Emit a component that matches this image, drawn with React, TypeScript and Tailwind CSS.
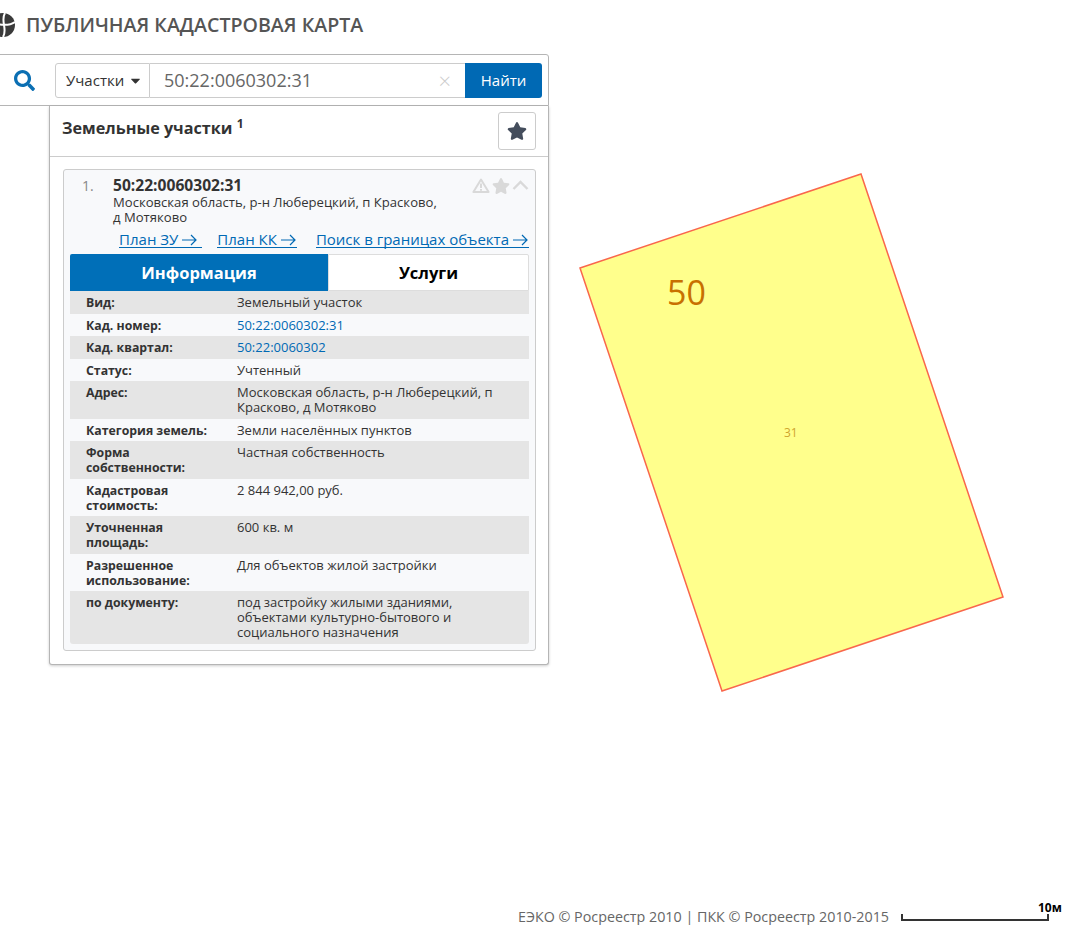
import { FaSearch, FaStar, FaCaretDown } from "react-icons/fa";

const rows: { label: string; value: string[]; link?: boolean }[] = [
  { label: "Вид:", value: ["Земельный участок"] },
  { label: "Кад. номер:", value: ["50:22:0060302:31"], link: true },
  { label: "Кад. квартал:", value: ["50:22:0060302"], link: true },
  { label: "Статус:", value: ["Учтенный"] },
  { label: "Адрес:", value: ["Московская область, р-н Люберецкий, п", "Красково, д Мотяково"] },
  { label: "Категория земель:", value: ["Земли населённых пунктов"] },
  { label: "Форма собственности:", value: ["Частная собственность"] },
  { label: "Кадастровая стоимость:", value: ["2 844 942,00 руб."] },
  { label: "Уточненная площадь:", value: ["600 кв. м"] },
  { label: "Разрешенное использование:", value: ["Для объектов жилой застройки"] },
  {
    label: "по документу:",
    value: ["под застройку жилыми зданиями,", "объектами культурно-бытового и", "социального назначения"],
  },
];

function Logo() {
  return (
    <svg width="24" height="24" viewBox="0 0 24 24" className="shrink-0">
      <circle cx="12" cy="12" r="12" fill="#3a3a3a" />
      <path d="M0 13 C8 9 16 15 24 9" stroke="#fff" strokeWidth="2" fill="none" />
      <path d="M14 0 C9 8 17 16 12 24" stroke="#fff" strokeWidth="2" fill="none" />
    </svg>
  );
}

function Arrow() {
  return (
    <svg width="16" height="12" viewBox="0 0 16 12" className="inline-block ml-[4px] align-[-1px]">
      <path d="M0 6H14M9 1l5 5-5 5" stroke="#0069b4" strokeWidth="1.2" fill="none" />
    </svg>
  );
}

function Warning() {
  return (
    <svg width="18" height="15" viewBox="0 0 18 15">
      <path d="M9 1.5L16.6 14H1.4Z" fill="none" stroke="#d9d9d9" strokeWidth="2" strokeLinejoin="round" />
      <path d="M8 5.5h2v4.5h-2zM8 11h2v1.8h-2z" fill="#d9d9d9" />
    </svg>
  );
}

export default function App() {
  return (
    <div className="relative h-[925px] w-full overflow-hidden bg-white font-['Open_Sans',sans-serif]">
      {/* Карта */}
      <svg width="1072" height="925" className="absolute inset-0">
        <polygon points="580,268 861,174 1003,597 722,691" fill="#ffff8c" stroke="#f9674c" strokeWidth="1.5" />
        <text x="667" y="305" fontSize="34" fontWeight="500" fill="#c87000" fontFamily="Open Sans">50</text>
        <text x="784" y="437" fontSize="12" fill="#cfa52e" fontFamily="Open Sans">31</text>
      </svg>

      {/* Шапка */}
      <div className="relative flex h-[54px] items-center gap-[11px] ml-[-9px] pb-[5px]">
        <Logo />
        <span className="text-[19.6px] font-semibold text-[#555] leading-none">ПУБЛИЧНАЯ КАДАСТРОВАЯ КАРТА</span>
      </div>

      {/* Поиск */}
      <div className="relative w-[550px] ml-[-1px] flex h-[52px] items-center border border-[#b5b5b5] rounded-tr-[3px] bg-white">
        <div className="w-[55px] flex justify-end pr-[20px]">
          <FaSearch className="text-[#0b6fb3] text-[21px]" />
        </div>
        <div className="flex h-[35px] w-[487px] text-[15px]">
          <div className="flex w-[95px] items-center border border-[#ccc] rounded-l-[3px] pl-[10px] gap-[4px] text-[#333]">
            Участки
            <FaCaretDown className="text-[#333] text-[15px]" />
          </div>
          <div className="flex flex-1 items-center border-y border-[#ccc] pl-[14px] pr-[14px] justify-between text-[18px] text-[#666]">
            <span>50:22:0060302:31</span>
            <span className="text-[#ccc] text-[22px] font-light">×</span>
          </div>
          <div className="flex w-[77px] items-center justify-center bg-[#0069b4] rounded-r-[3px] text-white">Найти</div>
        </div>
      </div>

      {/* Панель результатов */}
      <div className="relative ml-[49px] w-[500px] h-[559px] border-x border-b border-[#b5b5b5] rounded-b-[3px] bg-white shadow-[0_1px_3px_rgba(0,0,0,0.2)]">
        <div className="flex h-[51px] items-center justify-between border-b border-[#ccc] pl-[12px] pr-[12px]">
          <div className="text-[16.2px] font-bold text-[#333] pb-[6px]">
            Земельные участки <sup className="text-[12px]">1</sup>
          </div>
          <div className="flex h-[38px] w-[38px] items-center justify-center border border-[#ccc] rounded-[3px]">
            <FaStar className="text-[#444d5c] text-[20px]" />
          </div>
        </div>

        <div className="ml-[13px] mr-[12px] mt-[12px] border border-[#ccc] rounded-[3px] bg-[#f8f9fb] px-[6px] pb-[6px]">
          <div className="flex pt-[7px]">
            <div className="w-[43px] pl-[12px] text-[14px] text-[#888] leading-[17px]">1.</div>
            <div className="flex-1 w-[330px] text-[13.1px] leading-[15px] text-[#333]">
              <div className="text-[15.6px] font-bold leading-[16px] mb-[2px]">50:22:0060302:31</div>
              <div>Московская область, р-н Люберецкий, п Красково,</div>
              <div>д Мотяково</div>
            </div>
            <div className="flex items-center gap-[2px] h-[17px]">
              <Warning />
              <FaStar className="text-[#d9d9d9] text-[18px]" />
              <svg width="17" height="11" viewBox="0 0 17 11">
                <path d="M1.5 9L8.5 2l7 7" stroke="#d9d9d9" strokeWidth="2.4" fill="none" />
              </svg>
            </div>
          </div>

          <div className="flex justify-end pt-[6px] h-[29px] text-[15px] leading-[16px] text-[#0069b4]">
            <a className="border-b border-[#0069b4] h-[17px] pr-[4px] whitespace-nowrap">План ЗУ<Arrow /></a>
            <a className="ml-[15px] border-b border-[#0069b4] h-[17px] whitespace-nowrap">План КК<Arrow /></a>
            <a className="ml-[19px] border-b border-[#0069b4] h-[17px] whitespace-nowrap">Поиск в границах объекта<Arrow /></a>
          </div>

          <div className="flex h-[37px] text-[16.5px] font-bold">
            <div className="flex w-[258px] items-center justify-center pt-[2px] bg-[#006fb8] text-white rounded-tl-[2px]">Информация</div>
            <div className="flex flex-1 items-center justify-center pt-[2px] border border-[#ddd] bg-white text-black rounded-tr-[2px]">Услуги</div>
          </div>

          <div className="text-[13px] leading-[15px] text-[#333] rounded-b-[3px] overflow-hidden">
            {rows.map((r, i) => (
              <div key={r.label} className={`flex pt-[4px] pb-[3.5px] ${i % 2 === 0 ? "bg-[#e5e5e5]" : ""}`}>
                <div className="w-[167px] shrink-0 pl-[16px] pr-[20px] text-[12.3px] font-bold">{r.label}</div>
                <div className="flex-1">
                  {r.value.map((v) => (
                    <div key={v} className={r.link ? "text-[#0069b4]" : ""}>{v}</div>
                  ))}
                </div>
              </div>
            ))}
          </div>
        </div>
      </div>

      {/* Копирайт и масштаб */}
      <div className="absolute left-[518px] top-[908px] text-[14.3px] leading-[18px] text-[#666]">
        ЕЭКО © Росреестр 2010 | ПКК © Росреестр 2010-2015
      </div>
      <div className="absolute left-[901px] top-[914px] w-[148px] h-[7px] border-x-2 border-b-2 border-[#333]" />
      <div className="absolute left-[1038px] top-[900px] text-[12px] leading-[16px] font-bold text-black">10м</div>
    </div>
  );
}
